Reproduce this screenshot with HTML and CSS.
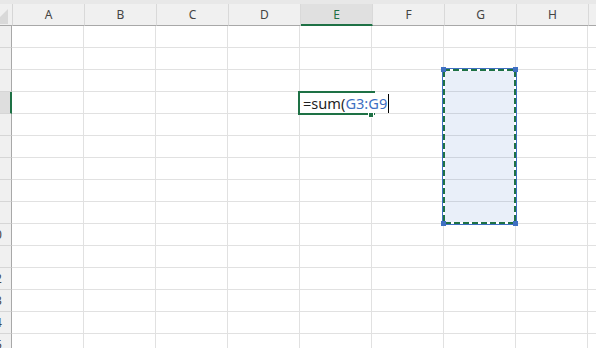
FILE: index.html
```html
<!DOCTYPE html>
<html>
<head>
<meta charset="utf-8">
<link rel="stylesheet" href="styles.css">
</head>
<body>
<div class="sheet">
  <div class="topband"></div>
  <div class="grid">
    <div class="row head">
      <div class="rh corner"><svg class="tri" width="34" height="21" viewBox="0 0 34 21"><polygon points="30,5 30,20 15,20" fill="#d9d9d9"/></svg></div>
      <div class="ch">A</div><div class="ch">B</div><div class="ch">C</div><div class="ch">D</div>
      <div class="ch on">E</div><div class="ch">F</div><div class="ch">G</div><div class="ch">H</div><div class="ch"></div>
    </div>
    <div class="row"><div class="rh">1</div><div class="c"></div><div class="c"></div><div class="c"></div><div class="c"></div><div class="c"></div><div class="c"></div><div class="c"></div><div class="c"></div><div class="c"></div></div>
    <div class="row"><div class="rh">2</div><div class="c"></div><div class="c"></div><div class="c"></div><div class="c"></div><div class="c"></div><div class="c"></div><div class="c"></div><div class="c"></div><div class="c"></div></div>
    <div class="row"><div class="rh">3</div><div class="c"></div><div class="c"></div><div class="c"></div><div class="c"></div><div class="c"></div><div class="c"></div><div class="c"></div><div class="c"></div><div class="c"></div></div>
    <div class="row"><div class="rh on">4</div><div class="c"></div><div class="c"></div><div class="c"></div><div class="c"></div><div class="c"></div><div class="c"></div><div class="c"></div><div class="c"></div><div class="c"></div></div>
    <div class="row"><div class="rh">5</div><div class="c"></div><div class="c"></div><div class="c"></div><div class="c"></div><div class="c"></div><div class="c"></div><div class="c"></div><div class="c"></div><div class="c"></div></div>
    <div class="row"><div class="rh">6</div><div class="c"></div><div class="c"></div><div class="c"></div><div class="c"></div><div class="c"></div><div class="c"></div><div class="c"></div><div class="c"></div><div class="c"></div></div>
    <div class="row"><div class="rh">7</div><div class="c"></div><div class="c"></div><div class="c"></div><div class="c"></div><div class="c"></div><div class="c"></div><div class="c"></div><div class="c"></div><div class="c"></div></div>
    <div class="row"><div class="rh">8</div><div class="c"></div><div class="c"></div><div class="c"></div><div class="c"></div><div class="c"></div><div class="c"></div><div class="c"></div><div class="c"></div><div class="c"></div></div>
    <div class="row"><div class="rh">9</div><div class="c"></div><div class="c"></div><div class="c"></div><div class="c"></div><div class="c"></div><div class="c"></div><div class="c"></div><div class="c"></div><div class="c"></div></div>
    <div class="row"><div class="rh">10</div><div class="c"></div><div class="c"></div><div class="c"></div><div class="c"></div><div class="c"></div><div class="c"></div><div class="c"></div><div class="c"></div><div class="c"></div></div>
    <div class="row"><div class="rh">11</div><div class="c"></div><div class="c"></div><div class="c"></div><div class="c"></div><div class="c"></div><div class="c"></div><div class="c"></div><div class="c"></div><div class="c"></div></div>
    <div class="row"><div class="rh">12</div><div class="c"></div><div class="c"></div><div class="c"></div><div class="c"></div><div class="c"></div><div class="c"></div><div class="c"></div><div class="c"></div><div class="c"></div></div>
    <div class="row"><div class="rh">13</div><div class="c"></div><div class="c"></div><div class="c"></div><div class="c"></div><div class="c"></div><div class="c"></div><div class="c"></div><div class="c"></div><div class="c"></div></div>
    <div class="row"><div class="rh">14</div><div class="c"></div><div class="c"></div><div class="c"></div><div class="c"></div><div class="c"></div><div class="c"></div><div class="c"></div><div class="c"></div><div class="c"></div></div>
    <div class="row"><div class="rh">15</div><div class="c"></div><div class="c"></div><div class="c"></div><div class="c"></div><div class="c"></div><div class="c"></div><div class="c"></div><div class="c"></div><div class="c"></div></div>
  </div>

  <svg class="sel" width="80" height="162" viewBox="0 0 80 162">
    <rect x="3" y="3" width="72" height="154" fill="rgba(40,100,200,0.1)"/>
    <rect x="2.5" y="2.5" width="74" height="156" fill="none" stroke="#3f70c2" stroke-width="1"/>
    <rect x="4" y="4" width="71" height="153" fill="none" stroke="#ffffff" stroke-width="2"/>
    <rect x="4" y="4" width="71" height="153" fill="none" stroke="#1e7145" stroke-width="2" stroke-dasharray="6 3"/>
    <rect x="1" y="1" width="5" height="5" fill="#3f70c2"/>
    <rect x="73" y="1" width="5" height="5" fill="#3f70c2"/>
    <rect x="1" y="155" width="5" height="5" fill="#3f70c2"/>
    <rect x="73" y="155" width="5" height="5" fill="#3f70c2"/>
  </svg>

  <div class="edit">
    <span class="etext"><span class="eq">=sum(</span><span class="ref">G3:G9</span><span class="caret"></span></span>
  </div>
  <div class="handle"></div>
</div>
</body>
</html>
```

FILE: styles.css
```css
html, body {
  margin: 0;
  padding: 0;
  background: #ffffff;
}
body {
  width: 596px;
  height: 348px;
  overflow: hidden;
  font-family: "Noto Sans", "Open Sans", "Liberation Sans", sans-serif;
}
.sheet {
  position: relative;
  width: 596px;
  height: 348px;
  overflow: hidden;
}
.topband {
  height: 4px;
  background: #e8e8e8;
}
.grid {
  margin-left: -22px;
}
.row {
  display: flex;
  height: 22px;
}
.rh {
  flex: 0 0 34px;
  box-sizing: border-box;
  height: 22px;
  background: #f0f0f0;
  border-right: 1px solid #a8a8a8;
  border-bottom: 1px solid #d6d6d6;
  font-size: 12px;
  line-height: 21px;
  color: #444444;
  text-align: center;
  padding-left: 1px;
}
.rh.on {
  background: #dedede;
  border-right: 2px solid #1e7145;
  padding-left: 2px;
}
.corner {
  position: relative;
  border-bottom: 1px solid #a8a8a8;
  border-right: 1px solid #d6d6d6;
  padding: 0;
}
.tri {
  display: block;
}
.c {
  flex: 0 0 72px;
  box-sizing: border-box;
  height: 22px;
  border-right: 1px solid #e1e1e1;
  border-bottom: 1px solid #e1e1e1;
}
.ch {
  flex: 0 0 72px;
  box-sizing: border-box;
  height: 22px;
  background: #f0f0f0;
  border-right: 1px solid #d9d9d9;
  border-bottom: 1px solid #a8a8a8;
  font-size: 12px;
  line-height: 21px;
  color: #444444;
  text-align: center;
}
.ch.on {
  background: #e0e0e0;
  border-bottom: 2px solid #1e7145;
  color: #1e7145;
}
.sel {
  position: absolute;
  left: 440px;
  top: 66px;
}
.edit {
  position: absolute;
  left: 298px;
  top: 91px;
  width: 72px;
  height: 20px;
  border: 2px solid #1e7145;
  border-right: none;
  background: #ffffff;
  display: flex;
  align-items: center;
  padding-left: 3px;
  box-sizing: content-box;
}
.etext {
  display: flex;
  align-items: center;
  height: 20px;
  background: #ffffff;
  font-size: 14.6px;
  white-space: nowrap;
  padding-right: 1px;
}
.eq {
  color: #1f1f1f;
}
.ref {
  color: #3d6fc2;
}
.caret {
  display: block;
  width: 0;
  height: 19px;
  border-left: 1px solid #000000;
  margin-left: 1px;
}
.handle {
  position: absolute;
  left: 368px;
  top: 112px;
  width: 4px;
  height: 4px;
  background: #1e7145;
  border: 1px solid #ffffff;
}
```
